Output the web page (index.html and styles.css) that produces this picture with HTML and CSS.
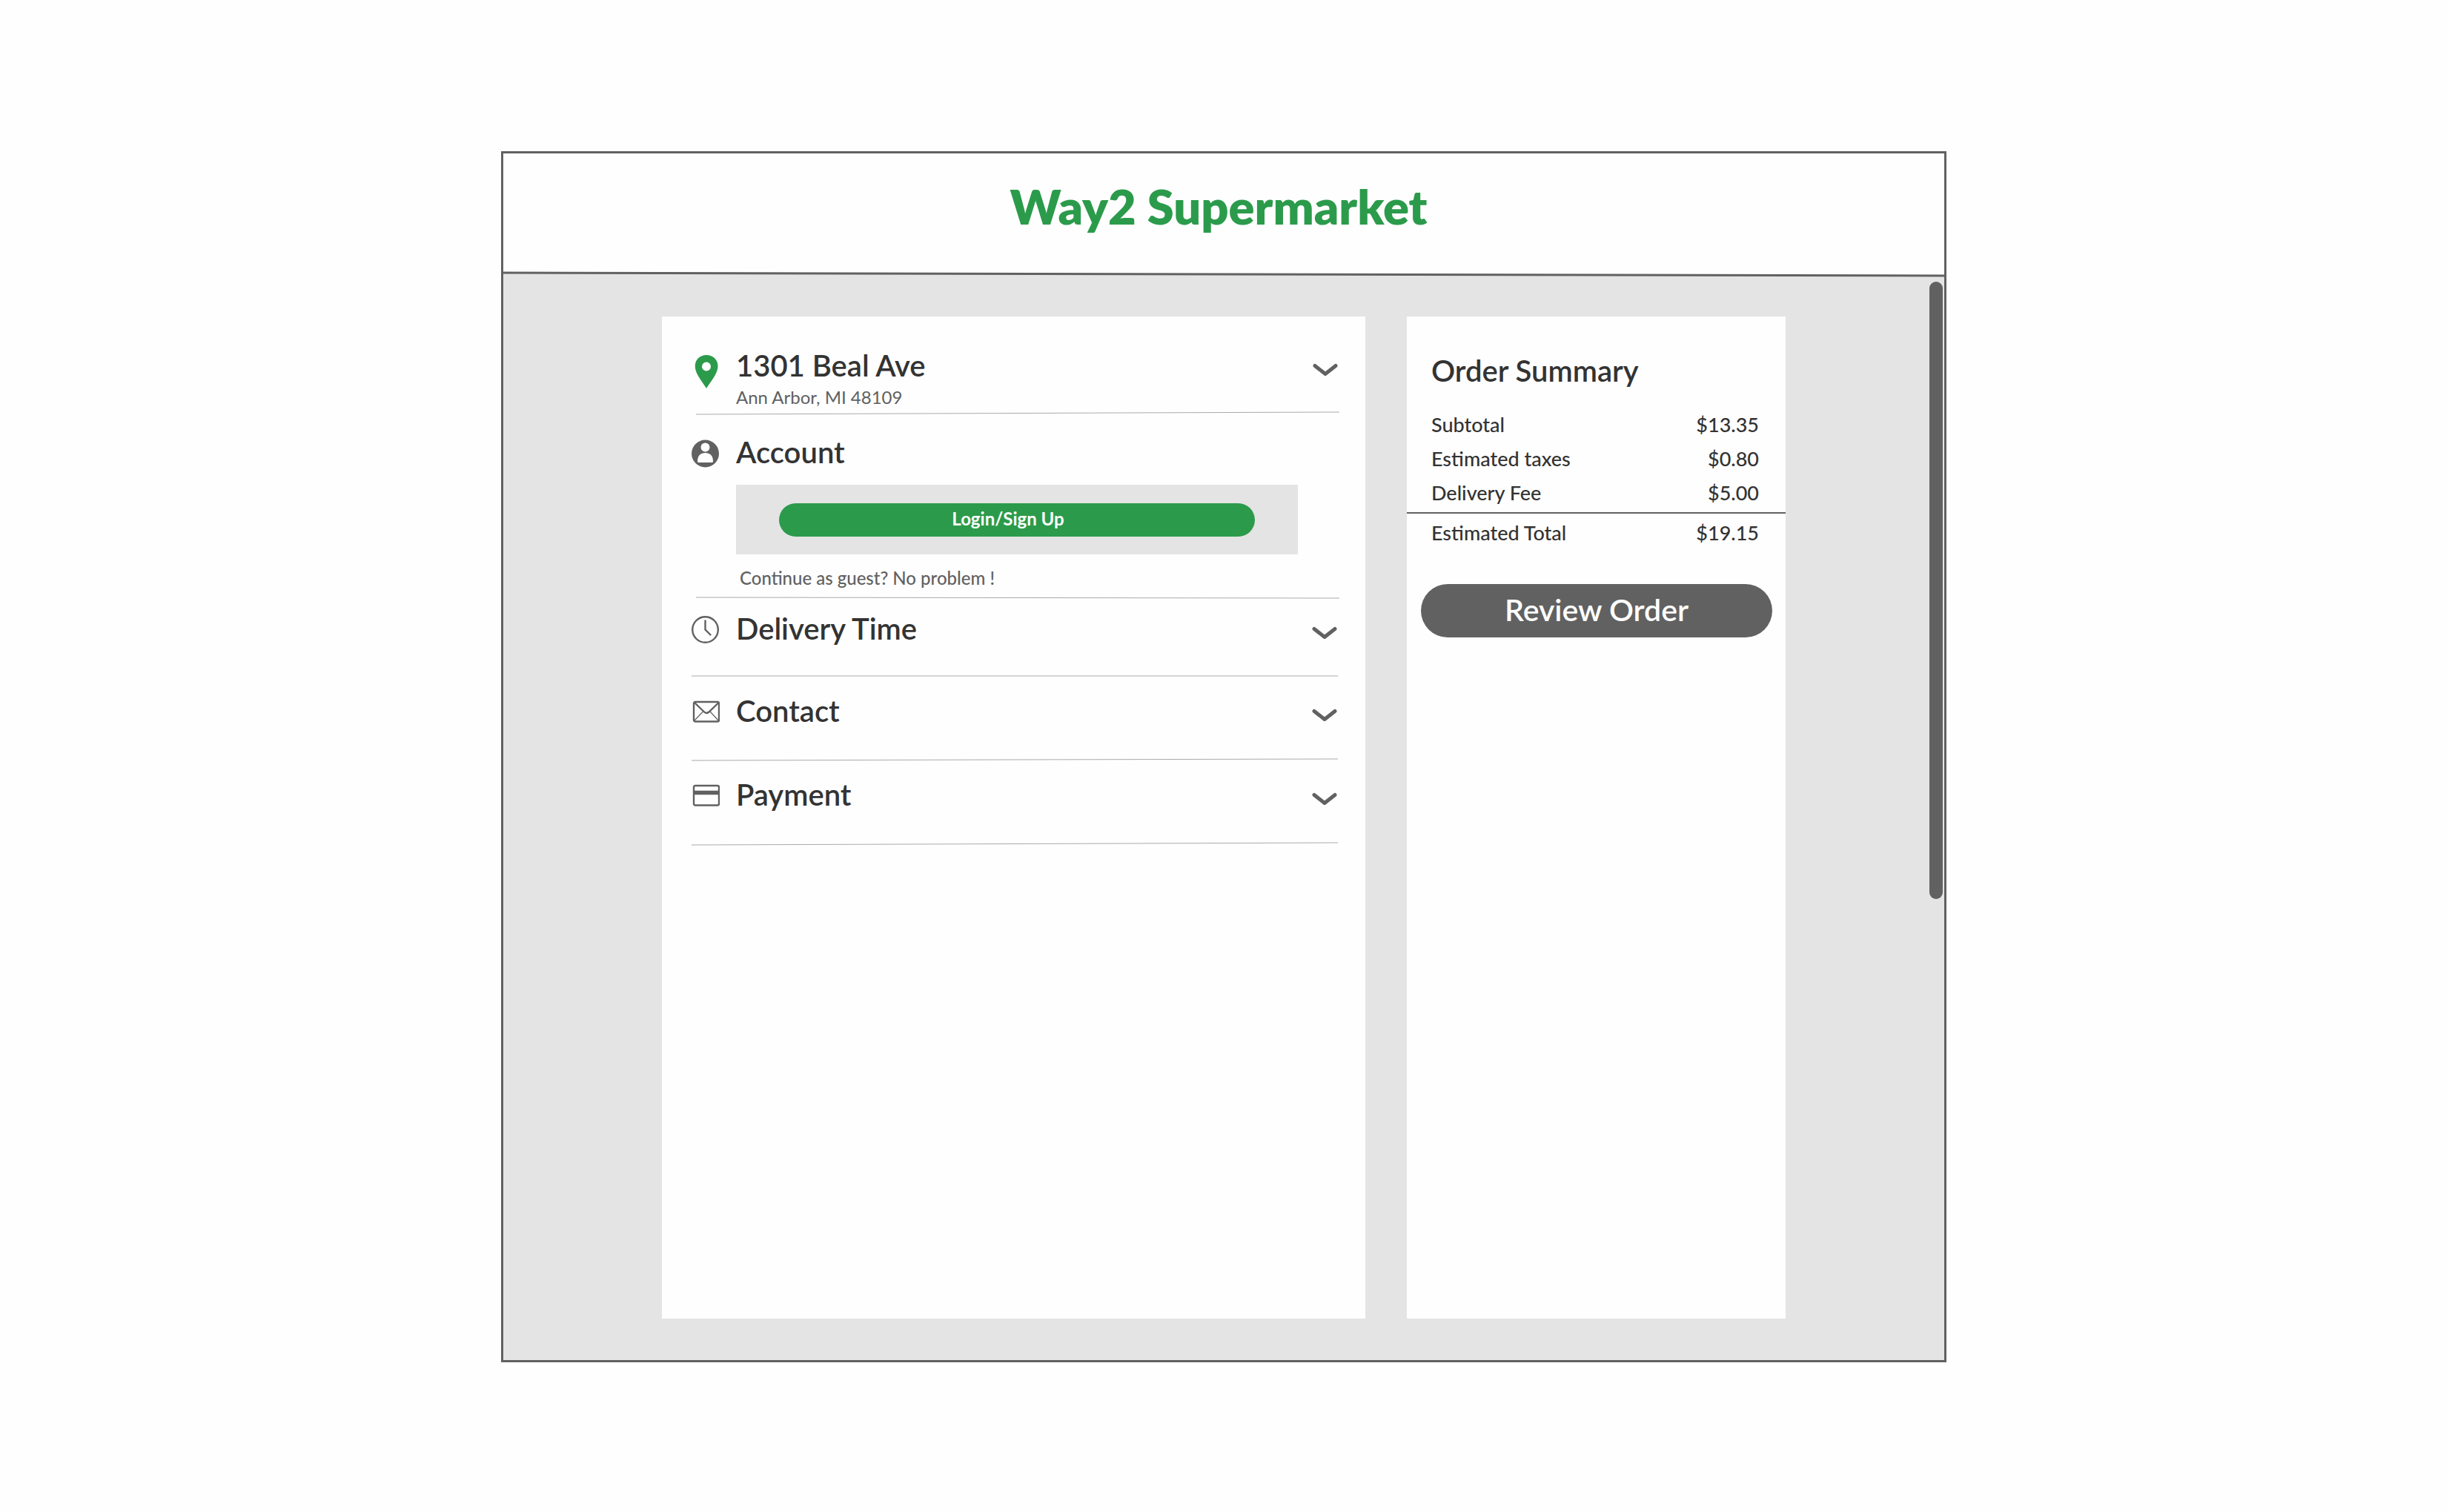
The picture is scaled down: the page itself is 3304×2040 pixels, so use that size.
FILE: index.html
```html
<!DOCTYPE html>
<html lang="en">
<head>
<meta charset="utf-8">
<meta name="viewport" content="width=device-width, initial-scale=1">
<title>Way2 Supermarket – Checkout</title>
<link rel="stylesheet" href="styles.css">
</head>
<body>
<div class="frame">
  <header class="header">
    <h1 class="brand">Way2 Supermarket</h1>
  </header>
  <svg class="header-edge" viewBox="0 0 100 8" preserveAspectRatio="none" aria-hidden="true">
    <path class="edge-fill" d="M0 2 100 6V8H0Z"/>
    <path class="edge-line" d="M0 2 100 6"/>
  </svg>

  <main class="stage">
    <div class="cards">
      <div class="card checkout">
        <section class="row row--address">
          <svg class="icon icon--pin" viewBox="0 0 38 52" aria-hidden="true">
            <path fill="#2b9b4b" fill-rule="evenodd" d="M20 3C11 3 4.700 9.500 4.700 18c0 10 9 20 15.300 30 6.300-10 15.500-20 15.500-30C35.500 9.500 29 3 20 3Zm0 9.500a6 6 0 1 1 0 12 6 6 0 0 1 0-12Z"/>
          </svg>
          <div class="body">
            <h2 class="title">1301 Beal Ave</h2>
            <p class="sub">Ann Arbor, MI 48109</p>
          </div>
          <button class="toggle" type="button" aria-label="Change address">
            <svg class="chevron" viewBox="0 0 36 20" aria-hidden="true"><path d="M4 4.500 18 15.500 32 4.500"/></svg>
          </button>
        </section>
        <svg class="divider divider--inset" viewBox="0 0 100 4" preserveAspectRatio="none" aria-hidden="true"><path d="M0 4 100 1"/></svg>

        <section class="row row--account">
          <svg class="icon" viewBox="0 0 38 38" aria-hidden="true">
            <circle cx="18.500" cy="19" r="18.500" fill="#616161"/>
            <circle cx="18.500" cy="10.500" r="6" fill="#fefefe"/>
            <path fill="#fefefe" d="M8 29.500c0-8 4.500-11.500 10.500-11.500S29 21.500 29 29.500q0 1.500-1.500 1.500h-18Q8 31 8 29.500Z"/>
          </svg>
          <div class="body">
            <h2 class="title">Account</h2>
            <div class="login-box">
              <button class="login" type="button">Login/Sign Up</button>
            </div>
            <p class="guest">Continue as guest? No problem !</p>
          </div>
        </section>
        <svg class="divider divider--inset" viewBox="0 0 100 4" preserveAspectRatio="none" aria-hidden="true"><path d="M0 2 100 3"/></svg>

        <section class="row row--delivery">
          <svg class="icon icon--line" viewBox="0 0 38 38" stroke-width="2.400" aria-hidden="true">
            <circle cx="18.500" cy="18.500" r="17.300"/>
            <path d="M18.500 6.500V18.500L25.500 25.500" stroke-linecap="round"/>
          </svg>
          <div class="body"><h2 class="title">Delivery Time</h2></div>
          <button class="toggle" type="button" aria-label="Choose delivery time">
            <svg class="chevron" viewBox="0 0 36 20" aria-hidden="true"><path d="M4 4.500 18 15.500 32 4.500"/></svg>
          </button>
        </section>
        <svg class="divider" viewBox="0 0 100 4" preserveAspectRatio="none" aria-hidden="true"><path d="M0 2H100"/></svg>

        <section class="row">
          <svg class="icon icon--line" viewBox="0 0 38 38" stroke-width="2.400" aria-hidden="true">
            <rect x="3" y="5" width="34" height="26.500" rx="2"/>
            <path d="M4 6 17 18.500Q20.200 21.500 23.500 18.500L36.500 6"/>
            <path d="M4 30 15.500 18M36 30 25 18" stroke-width="1.200"/>
          </svg>
          <div class="body"><h2 class="title">Contact</h2></div>
          <button class="toggle" type="button" aria-label="Edit contact">
            <svg class="chevron" viewBox="0 0 36 20" aria-hidden="true"><path d="M4 4.500 18 15.500 32 4.500"/></svg>
          </button>
        </section>
        <svg class="divider" viewBox="0 0 100 4" preserveAspectRatio="none" aria-hidden="true"><path d="M0 3 100 1"/></svg>

        <section class="row">
          <svg class="icon icon--line" viewBox="0 0 38 38" stroke-width="2.400" aria-hidden="true">
            <rect x="3" y="5" width="34" height="26.500" rx="2"/>
            <path d="M3 14.500H37" stroke-width="5.500"/>
          </svg>
          <div class="body"><h2 class="title">Payment</h2></div>
          <button class="toggle" type="button" aria-label="Edit payment">
            <svg class="chevron" viewBox="0 0 36 20" aria-hidden="true"><path d="M4 4.500 18 15.500 32 4.500"/></svg>
          </button>
        </section>
        <svg class="divider" viewBox="0 0 100 4" preserveAspectRatio="none" aria-hidden="true"><path d="M0 4 100 1"/></svg>
      </div>

      <aside class="card summary">
        <h2 class="title summary-title">Order Summary</h2>
        <table class="totals">
          <tbody>
            <tr><th scope="row">Subtotal</th><td>$13.35</td></tr>
            <tr><th scope="row">Estimated taxes</th><td>$0.80</td></tr>
            <tr class="last"><th scope="row">Delivery Fee</th><td>$5.00</td></tr>
          </tbody>
          <tfoot>
            <tr><th scope="row">Estimated Total</th><td>$19.15</td></tr>
          </tfoot>
        </table>
        <button class="review" type="button">Review Order</button>
      </aside>
    </div>
    <div class="scroll-thumb"></div>
  </main>
</div>
</body>
</html>
```
FILE: styles.css
```css
* {
  box-sizing: border-box;
}

body {
  margin: 0;
  padding: 204px 26px 202px 24px;
  background: #fefefe;
  color: #333;
  font-family: Lato, "Liberation Sans", sans-serif;
}

h1, h2, p {
  margin: 0;
}

button {
  border: 0;
  font-family: inherit;
  cursor: pointer;
}

.frame {
  display: flex;
  flex-direction: column;
  max-width: 1950px;
  min-height: calc(100vh - 406px);
  margin: 0 auto;
  border: 3px solid #616161;
  background: #fefefe;
}

.header {
  padding: 33px 14px 49px 0;
}

.brand {
  color: #2b9b4b;
  font-size: 65px;
  font-weight: 800;
  line-height: 77px;
  text-align: center;
}

.header-edge {
  display: block;
  width: 100%;
  height: 8px;
}

.edge-fill {
  fill: #e4e4e4;
}

.edge-line {
  fill: none;
  stroke: #616161;
  stroke-width: 3;
  vector-effect: non-scaling-stroke;
}

.stage {
  position: relative;
  display: flex;
  flex: 1;
  justify-content: center;
  padding: 53px 24px 56px;
  background: #e4e4e4;
}

.cards {
  display: grid;
  grid-template-columns: 949fr 511fr;
  gap: 56px;
  width: 100%;
  max-width: 1516px;
}

.card {
  background: #fefefe;
}

.checkout {
  padding: 42px 37px 42px 40px;
}

.row {
  display: flex;
  align-items: flex-start;
  padding: 21px 0 40px;
}

.row--address {
  margin-right: -1px;
  padding: 0;
}

.row--account {
  padding: 27px 0 4px;
}

.row--delivery {
  padding: 16px 0 38px;
}

.icon {
  flex: none;
  width: 38px;
  height: 38px;
  margin: 7px 22px 0 0;
}

.icon--pin {
  height: 52px;
}

.icon--line {
  fill: none;
  stroke: #616161;
}

.body {
  flex: 1;
}

.title {
  font-size: 40px;
  font-weight: 600;
  line-height: 48px;
}

.sub {
  color: #616161;
  font-size: 24px;
  line-height: 38px;
}

.toggle {
  margin-top: 20px;
  padding: 0;
  background: none;
}

.chevron {
  display: block;
  width: 36px;
  height: 20px;
  fill: none;
  stroke: #616161;
  stroke-width: 5;
  stroke-linecap: round;
  stroke-linejoin: round;
}

.divider {
  display: block;
  width: 100%;
  height: 4px;
  fill: none;
  stroke: #aaa;
  stroke-width: 1;
  overflow: visible;
}

.divider path {
  vector-effect: non-scaling-stroke;
}

.divider--inset {
  width: calc(100% - 4px);
  margin-left: 6px;
}

.login-box {
  margin: 20px 54px 12px 0;
  padding: 25px 58px 24px;
  background: #e4e4e4;
}

.login {
  display: block;
  width: 100%;
  height: 45px;
  padding: 0 24px 4px 0;
  border-radius: 23px;
  background: #2b9b4b;
  color: #fefefe;
  font-size: 24px;
  font-weight: 700;
}

.guest {
  padding-left: 5px;
  color: #616161;
  font-size: 24px;
  font-weight: 500;
  line-height: 40px;
}

.summary {
  padding: 49px 0;
}

.summary-title {
  padding: 0 33px;
}

.totals {
  width: 100%;
  margin-top: 26px;
  border-collapse: collapse;
  font-size: 27px;
  line-height: 46px;
}

.totals th {
  padding: 0 0 0 33px;
  font-weight: 500;
  text-align: left;
}

.totals td {
  padding: 0 36px 0 0;
  font-weight: 500;
  text-align: right;
}

.totals .last th,
.totals .last td {
  padding-bottom: 3px;
}

.totals tfoot {
  border-top: 2px solid #616161;
}

.totals tfoot th,
.totals tfoot td {
  padding-top: 3px;
}

.review {
  display: block;
  width: calc(100% - 37px);
  height: 72px;
  margin: 46px 18px 0 19px;
  padding: 0 0 4px;
  border-radius: 36px;
  background: #616161;
  color: #fefefe;
  font-size: 41px;
  font-weight: 600;
}

.scroll-thumb {
  position: absolute;
  top: 6px;
  right: 2px;
  width: 18px;
  height: 57%;
  border-radius: 9px;
  background: #616161;
}
```
